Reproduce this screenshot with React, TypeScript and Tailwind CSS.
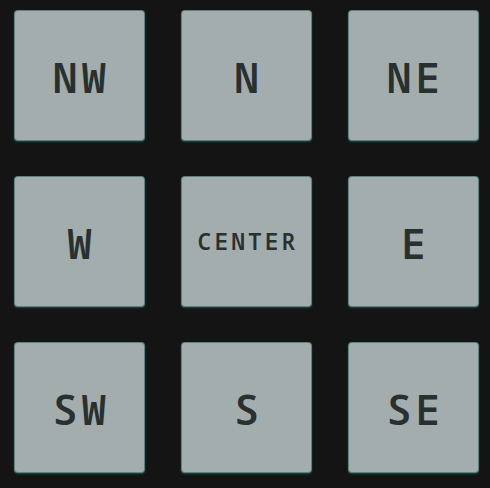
const CELLS = ["NW", "N", "NE", "W", "CENTER", "E", "SW", "S", "SE"];

export default function App() {
  return (
    <div className="min-h-[488px] w-[490px] bg-[#141414] pl-[14px] pt-[10px]">
      <div className="grid grid-cols-[131px_131px_131px] gap-x-[36px] gap-y-[35px]">
        {CELLS.map((c) => (
          <div
            key={c}
            className="flex h-[131px] items-center justify-center rounded-[4px] border border-[#3d6f6b]/70 bg-[#a4adad] shadow-[0_1px_2px_rgba(40,110,105,0.6)]"
          >
            <span
              className={`font-semibold leading-none text-[#283030] ${
                c === "CENTER"
                  ? "pl-[0.13em] text-[23px] tracking-[0.13em]"
                  : "pl-[0.1em] pt-[4px] text-[41px] tracking-[0.1em]"
              }`}
              style={{ fontFamily: '"Noto Sans Mono", "DejaVu Sans Mono", monospace' }}
            >
              {c}
            </span>
          </div>
        ))}
      </div>
    </div>
  );
}
